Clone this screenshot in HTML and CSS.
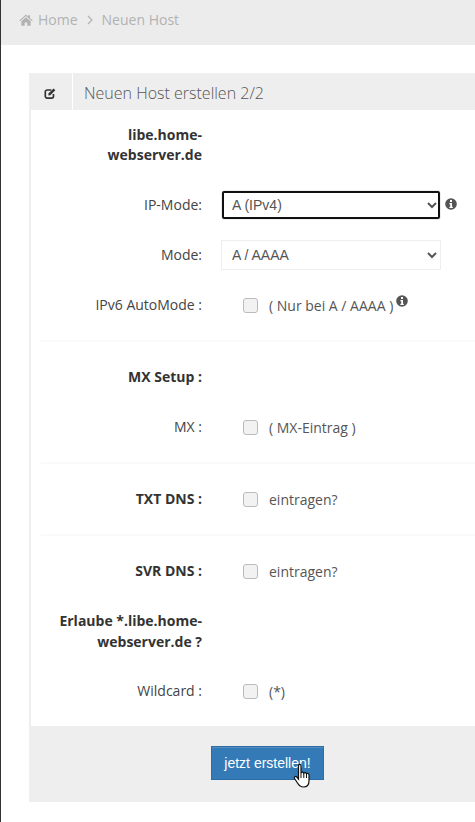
FILE: index.html
```html
<!DOCTYPE html>
<html lang="de">
  <head>
    <meta charset="UTF-8" />
    <meta name="viewport" content="width=device-width, initial-scale=1.0" />
    <title>Neuen Host</title>
    <link rel="stylesheet" href="styles.css">
  </head>
  <body>
    <div class="breadcrumb">
      <svg class="home-icon" viewBox="0 0 16 14" width="14" height="12"><path d="M8 0.6 L10.6 2.9 V1.4 H12.6 V4.7 L15.8 7.5 L15 8.4 L8 2.4 L1 8.4 L0.2 7.5 Z M2.6 8.4 L8 3.8 L13.4 8.4 V13.6 H9.6 V9.8 H6.4 V13.6 H2.6 Z" fill="#b2b2b2"/></svg>
      <span>Home</span>
      <svg class="chevron" viewBox="0 0 6 10" width="6" height="10"><path d="M1 1 L5 5 L1 9" fill="none" stroke="#b2b2b2" stroke-width="1.2"/></svg>
      <span>Neuen Host</span>
    </div>

    <div class="panel">
      <div class="panel-head">
        <div class="panel-icon">
          <svg viewBox="0 0 14 14" width="13" height="13"><path d="M10.2 7.6 V10 A2 2 0 0 1 8.2 12 H3.4 A2 2 0 0 1 1.4 10 V5.2 A2 2 0 0 1 3.4 3.2 H8" fill="none" stroke="#333" stroke-width="1.8"/><path d="M5 6.8 L10.4 1.6 L12.2 3.4 L6.8 8.8 L4.6 9.1 Z" fill="#333"/></svg>
        </div>
        <div class="panel-title">Neuen Host erstellen 2/2</div>
      </div>

      <div class="panel-body">
        <div class="row text-row">
          <div class="label bold">libe.home-<br />webserver.de</div>
        </div>
        <div class="row">
          <div class="label">IP-Mode:</div>
          <select class="select focused"><option>A (IPv4)</option></select>
          <svg class="info select-info" viewBox="0 0 12 12" width="12" height="12"><use href="#info" /></svg>
        </div>
        <div class="row">
          <div class="label">Mode:</div>
          <select class="select"><option>A / AAAA</option></select>
        </div>
        <div class="row">
          <div class="label">IPv6 AutoMode :</div>
          <label class="check"><input type="checkbox" />( Nur bei A / AAAA )</label>
          <svg class="info check-info" viewBox="0 0 12 12" width="12" height="12">
            <defs>
              <g id="info"><circle cx="6" cy="6" r="5.8" fill="#555"/><rect x="5" y="2" width="2" height="2" fill="#fff"/><path d="M4.4 5 H7 V8.8 H7.8 V10 H4.4 V8.8 H5.2 V6.2 H4.4 Z" fill="#fff"/></g>
            </defs>
            <use href="#info" />
          </svg>
        </div>
        <hr class="divider" />
        <div class="row">
          <div class="label bold">MX Setup :</div>
        </div>
        <div class="row">
          <div class="label">MX :</div>
          <label class="check"><input type="checkbox" />( MX-Eintrag )</label>
        </div>
        <hr class="divider" />
        <div class="row">
          <div class="label bold">TXT DNS :</div>
          <label class="check"><input type="checkbox" />eintragen?</label>
        </div>
        <hr class="divider" />
        <div class="row">
          <div class="label bold">SVR DNS :</div>
          <label class="check"><input type="checkbox" />eintragen?</label>
        </div>
        <div class="row text-row wide-lines">
          <div class="label bold">Erlaube *.libe.home-<br />webserver.de ?</div>
        </div>
        <div class="row">
          <div class="label">Wildcard :</div>
          <label class="check"><input type="checkbox" />(*)</label>
        </div>
      </div>

      <div class="panel-foot">
        <button class="btn">jetzt erstellen!</button>
        <!-- mouse pointer caught in the screenshot -->
        <svg class="cursor" viewBox="0 0 18 26" width="18" height="26"><path d="M5.5 2.5 C5.5 1 8 1 8 2.5 V10 C8.5 8.8 10.5 8.8 10.8 10.2 C11.3 9.2 13.2 9.4 13.5 10.8 C14.2 10 16 10.4 16 12 V18 C16 21.5 14 24 10.5 24 C7.5 24 6 22.5 4.5 20 L1.5 15.5 C0.8 14 2.6 12.8 3.8 14 L5.5 16 Z" fill="#fff" stroke="#111" stroke-width="1.2"/><path d="M8 10 V15 M10.8 10.2 V15 M13.5 10.8 V15" stroke="#111" stroke-width="1" fill="none"/></svg>
      </div>
    </div>
  </body>
</html>
```

FILE: styles.css
```css
* {
  box-sizing: border-box;
}
html {
  overflow: hidden;
}
body {
  margin: 0;
  min-height: 822px;
  background-color: #fff;
  border-left: 1px solid #333;
  font-family: "Open Sans", sans-serif;
  font-size: 14px;
  color: #333;
}

/* Breadcrumb */
.breadcrumb {
  display: flex;
  align-items: center;
  height: 45px;
  padding: 0 0 6px 18px;
  background-color: #ececec;
  color: #b2b2b2;
  font-size: 14px;
}
.home-icon {
  margin-right: 5px;
}
.chevron {
  margin: 0 9px 0 9px;
}

/* Panel */
.panel {
  margin: 28px 0 0 28px;
  border-left: 2px solid #eee;
}
.panel-head {
  display: flex;
  height: 37px;
  background-color: #eee;
  margin-left: -2px;
}
.panel-icon {
  display: flex;
  align-items: center;
  justify-content: center;
  width: 44px;
  padding: 3px 1px 0 0;
  border-right: 1px solid #fff;
}
.panel-title {
  padding: 2px 0 0 11px;
  font-size: 16px;
  font-weight: 300;
  line-height: 37px;
  color: #555;
}
.panel-body {
  padding-top: 11px;
}

.row {
  display: flex;
  align-items: center;
  min-height: 30px;
  margin-bottom: 20px;
}
.text-row {
  padding: 4px 0 5px;
}
.wide-lines {
  padding-bottom: 4px;
}
.wide-lines .label {
  line-height: 21px;
}
.label {
  flex: none;
  width: 171px;
  text-align: right;
  line-height: 20px;
  color: #444;
}
.bold {
  font-weight: 700;
  color: #333;
}

.select {
  width: 220px;
  height: 30px;
  margin-left: 19px;
  padding-left: 6px;
  border: 1px solid #eee;
  border-radius: 0;
  background-color: #fff;
  color: #555;
  font-family: "Liberation Sans", sans-serif;
  font-size: 14px;
}
.focused {
  outline: 2px solid #111;
  outline-offset: -3px;
  border-radius: 3px;
}

.check {
  display: flex;
  align-items: center;
  margin-left: 41px;
  color: #555;
  font-size: 14px;
}
.check input {
  appearance: none;
  width: 15px;
  height: 15px;
  margin: 0 11px 0 0;
  border: 1px solid #bbb;
  border-radius: 3px;
  background-color: #f2f2f2;
}

.info {
  flex: none;
}
.select-info {
  margin: -2px 0 0 4px;
}
.check-info {
  margin: -8px 0 0 3px;
}

.divider {
  height: 2px;
  margin: 0 0 20px 10px;
  border: 0;
  background-color: #fafafa;
}

/* Footer */
.panel-foot {
  position: relative;
  height: 76px;
  padding: 20px 0 0 182px;
  background-color: #eee;
  margin-left: -2px;
}
.btn {
  width: 113px;
  height: 34px;
  border: 1px solid #2e6da4;
  background-color: #337ab7;
  box-shadow: inset 0 1px 0 rgba(255, 255, 255, 0.15);
  color: #fff;
  font-family: "Liberation Sans", sans-serif;
  font-size: 14px;
}
.cursor {
  position: absolute;
  left: 264px;
  top: 37px;
}
```
